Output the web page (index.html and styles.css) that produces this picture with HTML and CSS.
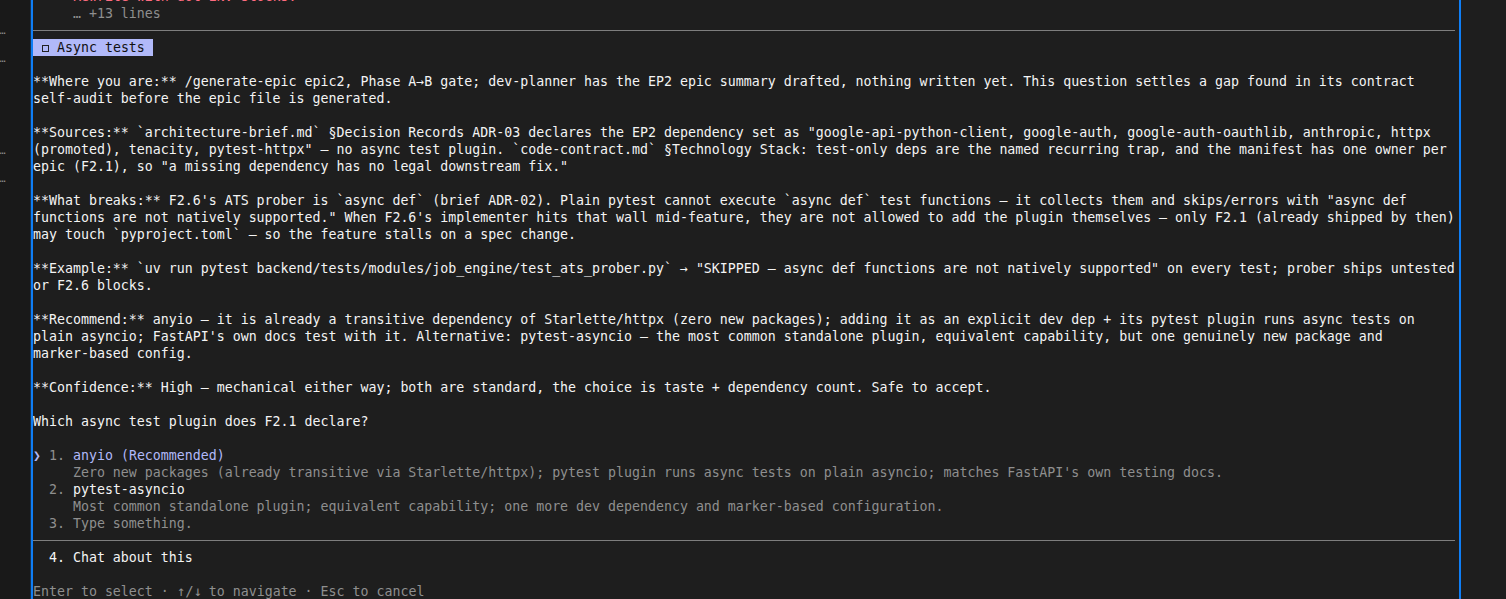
FILE: index.html
```html
<!DOCTYPE html>
<html>
<head>
<meta charset="utf-8">
<link rel="stylesheet" href="styles.css">
</head>
<body>
<div class="screen">
  <div class="gutter">
    <span class="gdot g1">…</span>
    <span class="gdot g2">…</span>
    <span class="gdot g3">…</span>
    <span class="gdot g4">…</span>
  </div>
  <div class="pane">
    <div class="rows">
      <div class="row red">     Rewrite with dot-ENV stocks.</div>
      <div class="row dim">     … +13 lines</div>
      <div class="row rule-row"><div class="rule"></div></div>
      <div class="row"><span class="chip"> <span class="box"></span> Async tests </span></div>
      <div class="row"> </div>
      <div class="row">**Where you are:** /generate-epic epic2, Phase A→B gate; dev-planner has the EP2 epic summary drafted, nothing written yet. This question settles a gap found in its contract</div>
      <div class="row">self-audit before the epic file is generated.</div>
      <div class="row"> </div>
      <div class="row">**Sources:** `architecture-brief.md` §Decision Records ADR-03 declares the EP2 dependency set as "google-api-python-client, google-auth, google-auth-oauthlib, anthropic, httpx</div>
      <div class="row">(promoted), tenacity, pytest-httpx" — no async test plugin. `code-contract.md` §Technology Stack: test-only deps are the named recurring trap, and the manifest has one owner per</div>
      <div class="row">epic (F2.1), so "a missing dependency has no legal downstream fix."</div>
      <div class="row"> </div>
      <div class="row">**What breaks:** F2.6's ATS prober is `async def` (brief ADR-02). Plain pytest cannot execute `async def` test functions — it collects them and skips/errors with "async def</div>
      <div class="row">functions are not natively supported." When F2.6's implementer hits that wall mid-feature, they are not allowed to add the plugin themselves — only F2.1 (already shipped by then)</div>
      <div class="row">may touch `pyproject.toml` — so the feature stalls on a spec change.</div>
      <div class="row"> </div>
      <div class="row">**Example:** `uv run pytest backend/tests/modules/job_engine/test_ats_prober.py` → "SKIPPED — async def functions are not natively supported" on every test; prober ships untested</div>
      <div class="row">or F2.6 blocks.</div>
      <div class="row"> </div>
      <div class="row">**Recommend:** anyio — it is already a transitive dependency of Starlette/httpx (zero new packages); adding it as an explicit dev dep + its pytest plugin runs async tests on</div>
      <div class="row">plain asyncio; FastAPI's own docs test with it. Alternative: pytest-asyncio — the most common standalone plugin, equivalent capability, but one genuinely new package and</div>
      <div class="row">marker-based config.</div>
      <div class="row"> </div>
      <div class="row">**Confidence:** High — mechanical either way; both are standard, the choice is taste + dependency count. Safe to accept.</div>
      <div class="row"> </div>
      <div class="row">Which async test plugin does F2.1 declare?</div>
      <div class="row"> </div>
      <div class="row"><span class="ptr">❯</span> <span class="dim">1.</span> <span class="accent">anyio (Recommended)</span></div>
      <div class="row dim">     Zero new packages (already transitive via Starlette/httpx); pytest plugin runs async tests on plain asyncio; matches FastAPI's own testing docs.</div>
      <div class="row">  <span class="dim">2.</span> pytest-asyncio</div>
      <div class="row dim">     Most common standalone plugin; equivalent capability; one more dev dependency and marker-based configuration.</div>
      <div class="row dim">  3. Type something.</div>
      <div class="row rule-row"><div class="rule"></div></div>
      <div class="row">  4. Chat about this</div>
      <div class="row"> </div>
      <div class="row dim">Enter to select · <span class="arr">↑/↓</span> to navigate · Esc to cancel</div>
    </div>
  </div>
  <div class="side"></div>
</div>
</body>
</html>
```
FILE: styles.css
```css
html, body {
  margin: 0;
  padding: 0;
  background: #1e1e1e;
  overflow: hidden;
}

.screen {
  display: flex;
  width: 1506px;
  height: 599px;
  overflow: hidden;
  font-family: "DejaVu Sans Mono", "Liberation Mono", monospace;
  font-size: 13.287px;
  line-height: 17px;
  color: #f4f4f4;
}

.gutter {
  width: 30px;
  flex: none;
  background: #191919;
  border-right: 1px solid #17324f;
  display: flex;
  flex-direction: column;
  align-items: flex-start;
  overflow: hidden;
}

.gdot {
  display: block;
  color: #8a8a8a;
  font-size: 11px;
  line-height: 10px;
  height: 10px;
  margin-left: -1px;
}
.g1 { margin-top: 26px; }
.g2 { margin-top: 18px; }
.g3 { margin-top: 82px; }
.g4 { margin-top: 18px; }

.pane {
  width: 1426px;
  flex: none;
  border-left: 2px solid #0f7ef5;
  border-right: 2px solid #0f7ef5;
  background: #1e1e1e;
  overflow: hidden;
}

.rows {
  margin-top: -12px;
}

.row {
  height: 17px;
  white-space: pre;
}

.rule-row {
  display: flex;
  align-items: center;
}

.rule {
  height: 1px;
  width: 1422px;
  background: #7e7e7e;
  margin-top: -1px;
}

.red { color: #ff6b80; }
.dim { color: #8f8f8f; }
.accent { color: #b1b9f9; }

.arr {
  display: inline-block;
  width: 24px;
  font-size: 14px;
  text-align: center;
}

.ptr {
  display: inline-block;
  width: 8px;
  color: #b1b9f9;
  font-weight: bold;
  font-size: 13px;
  text-align: left;
}

.chip {
  background: #b1b9f9;
  color: #111111;
  display: inline-block;
  height: 17px;
}

.box {
  display: inline-block;
  width: 8px;
  height: 17px;
  vertical-align: top;
  position: relative;
}
.box::after {
  content: "";
  position: absolute;
  left: 1px;
  top: 6px;
  width: 5px;
  height: 5px;
  border: 1px solid #222;
}

.side {
  flex: 1;
  background: #1e1e1e;
}
```
